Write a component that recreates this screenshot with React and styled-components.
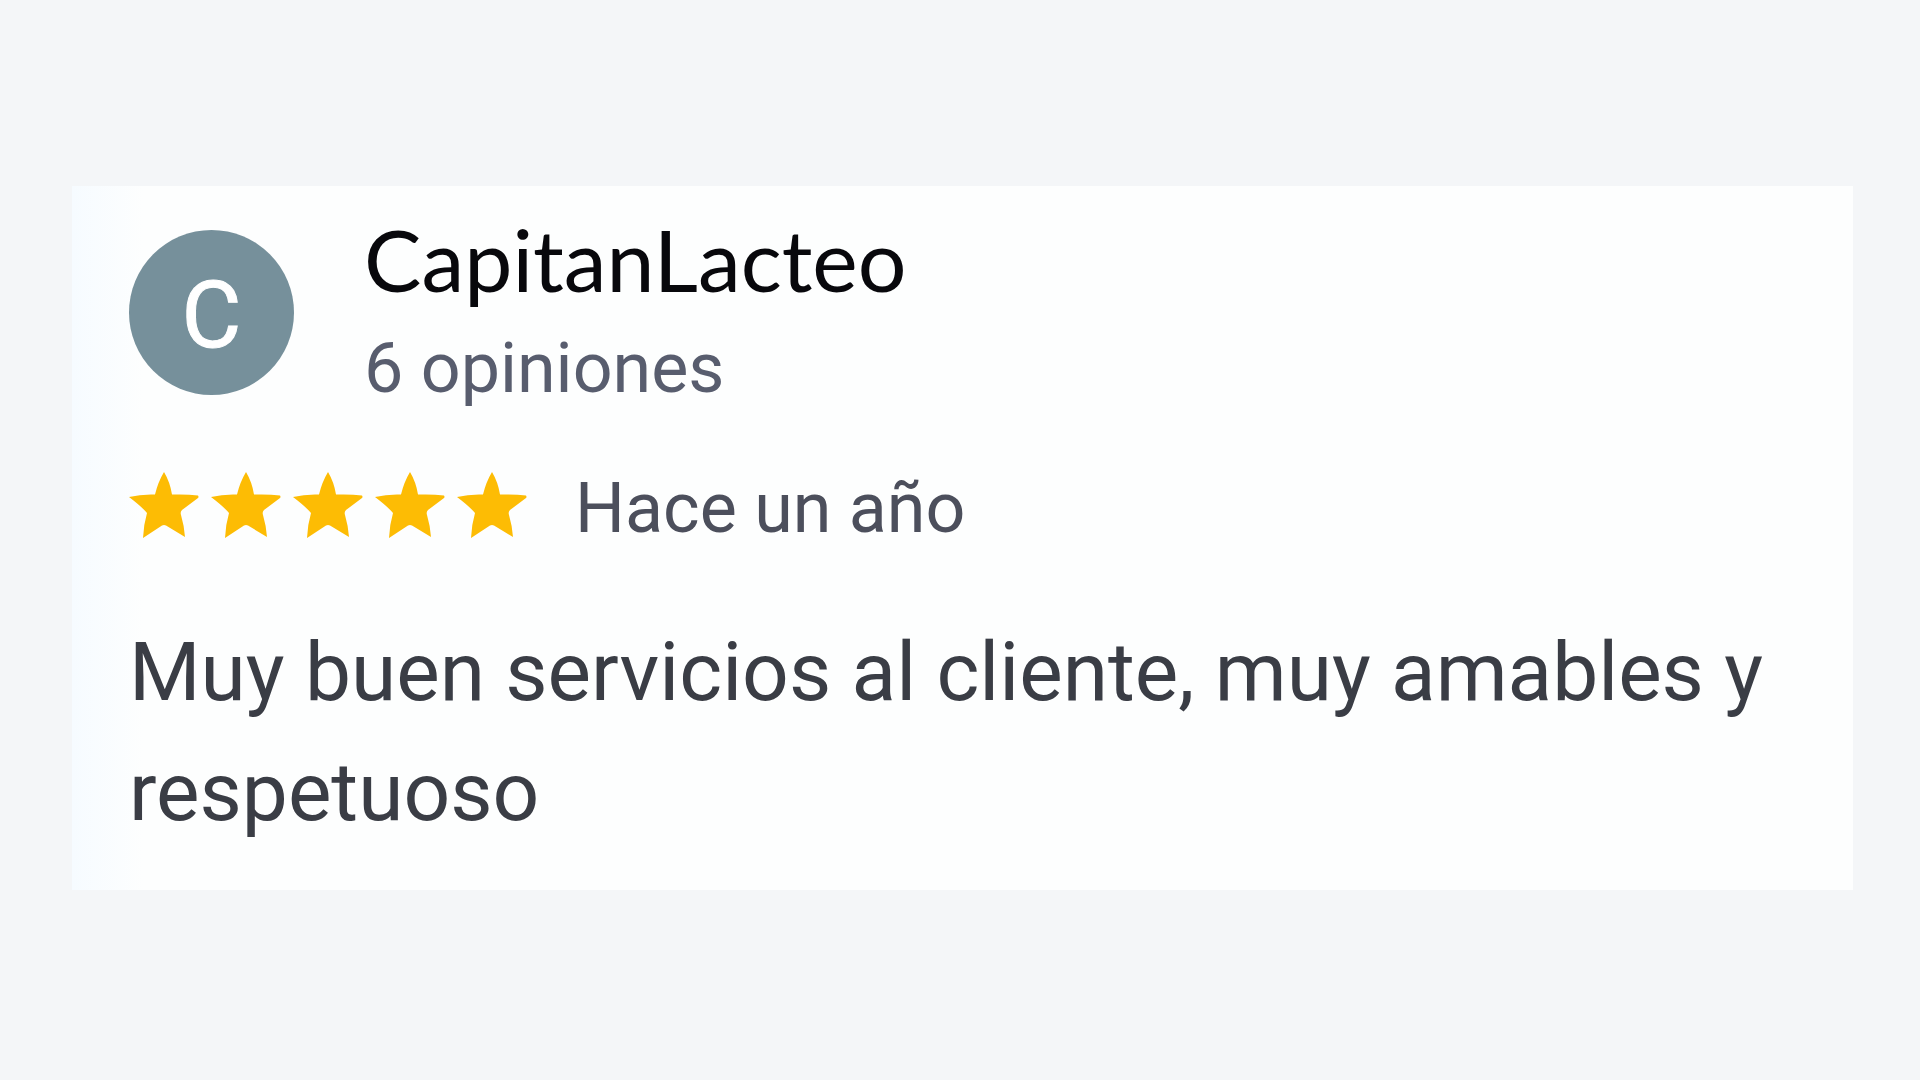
import styled, { createGlobalStyle } from "styled-components";

const App = () => {
    return (
        <Page>
            <GlobalStyle />
            <Card>
                <Header>
                    <Avatar aria-hidden="true">C</Avatar>
                    <Author>
                        <Name>CapitanLacteo</Name>
                        <Count>6 opiniones</Count>
                    </Author>
                </Header>
                <Rating>
                    <Stars role="img" aria-label="5 de 5 estrellas">
                        {[1, 2, 3, 4, 5].map((n) => (
                            <Star key={n} viewBox="0 0 70 66">
                                <path d="M35 0 Q41 10 43 22.5 Q58 22 69 23.5 Q70 25 69 26 L53 38 Q51 40 52 43 Q55 53 56 65 L37 53.5 Q35 52.5 33 53.5 L14 66 Q14.500 53 18 41 Q12 34 0 25 Q12 22 26 22.500 Q29 10 35 0 Z" />
                            </Star>
                        ))}
                    </Stars>
                    <Time>Hace un año</Time>
                </Rating>
                <Comment>Muy buen servicios al cliente, muy amables y respetuoso</Comment>
            </Card>
        </Page>
    );
};

const GlobalStyle = createGlobalStyle`
body {
    margin: 0;
    background: #f4f6f8;
}
`;

// page
const Page = styled.main`
min-height: 100vh;
box-sizing: border-box;
padding: 186px 67px 190px 72px;
font-family: Roboto, "Noto Sans", sans-serif;
`;

// review card
const Card = styled.article`
box-sizing: border-box;
padding: 32px 57px 38px;
background: linear-gradient(to right, #f6fbff, #fdfefe 72px);
`;

// avatar and author
const Header = styled.header`
display: flex;
align-items: flex-start;
gap: 70px;
`;

const Avatar = styled.div`
display: flex;
align-items: center;
justify-content: center;
box-sizing: border-box;
width: 165px;
height: 165px;
margin-top: 12px;
padding-top: 6px;
border-radius: 50%;
background: #76909b;
color: #fff;
font-size: 92px;
font-weight: 400;
-webkit-text-stroke: 1px #fff;
`;

const Author = styled.div`
display: flex;
flex-direction: column;
gap: 18px;
`;

const Name = styled.h1`
margin: 0;
color: #08080c;
font-family: Lato, sans-serif;
font-size: 86px;
font-weight: 400;
line-height: 82px;
`;

const Count = styled.p`
margin: 0;
color: #585d6e;
font-size: 70px;
line-height: 100px;
`;

// stars and date
const Rating = styled.div`
display: flex;
align-items: center;
gap: 48px;
margin-top: 36px;
`;

const Stars = styled.div`
display: flex;
gap: 12px;
`;

const Star = styled.svg`
width: 70px;
height: 66px;
fill: #fdbc04;
`;

const Time = styled.span`
padding-top: 6px;
color: #4c4f5c;
font-size: 70px;
line-height: 96px;
`;

// review text
const Comment = styled.p`
margin: 56px 0 0;
color: #3a3d45;
font-size: 82px;
line-height: 120px;
`;

export default App;
